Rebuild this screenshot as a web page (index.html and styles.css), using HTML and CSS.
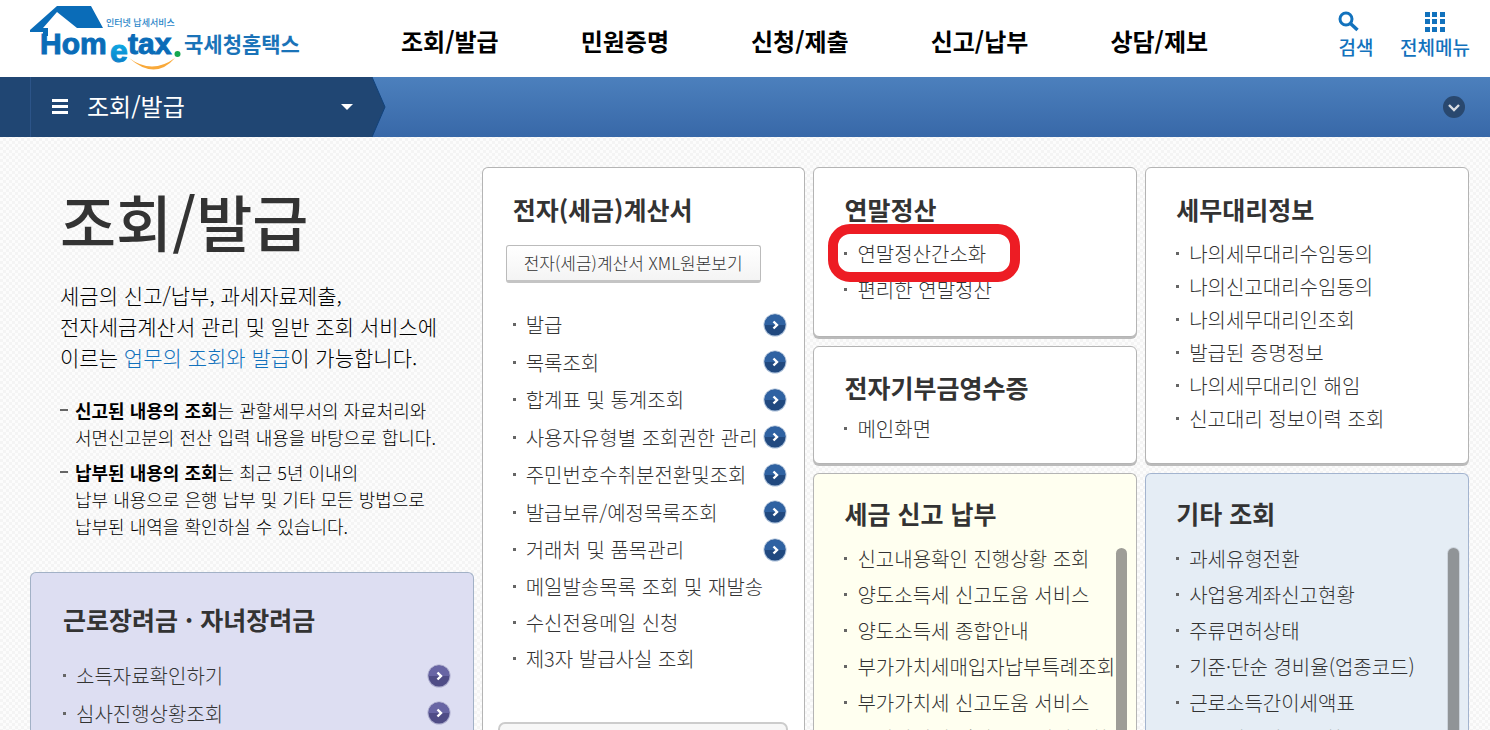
FILE: index.html
```html
<!DOCTYPE html>
<html lang="ko">
<head>
<meta charset="utf-8">
<meta name="viewport" content="width=device-width, initial-scale=1">
<title>국세청 홈택스 - 조회/발급</title>
<link rel="stylesheet" href="styles.css">
</head>
<body>
<svg class="defs" aria-hidden="true">
  <symbol id="go" viewBox="0 0 24 24">
    <circle class="go-rim" cx="12" cy="12" r="11.5"/>
    <circle class="go-disc" cx="12" cy="12" r="10.5"/>
    <path class="go-shine" d="M1.500 12a10.500 10.500 0 0 1 21 0z"/>
    <path d="M10.500 8.500 14 12l-3.500 3.500" fill="none" stroke="#fff" stroke-width="2.400"/>
  </symbol>
</svg>

<header class="header">
  <a class="logo" href="#" aria-label="Hometax 국세청홈택스">
    <svg width="272" height="72" viewBox="0 0 272 72">
      <defs>
        <linearGradient id="eFill" x1="0" y1="0" x2="0" y2="1"><stop offset="0" stop-color="#12c0f2"/><stop offset="1" stop-color="#0a72c0"/></linearGradient>
      </defs>
      <path d="M0 32v-2L27 6h34l12 22H47L27 12 13 28v4z" fill="#0a6cb8"/>
      <path d="M13 28h5v8h-5z" fill="#0a6cb8"/>
      <text class="logo-small" x="76" y="26">인터넷 납세서비스</text>
      <text class="logo-word" x="10" y="54">Hom</text>
      <text class="logo-e" x="80" y="62">e</text>
      <text class="logo-word" x="98" y="54">tax</text>
      <circle cx="147.500" cy="54" r="3" fill="#14a850"/>
      <path d="M99 58q23 17 46 0-20 23-46 0z" fill="#f9a93a"/>
      <text class="logo-name" x="154" y="52">국세청홈택스</text>
    </svg>
  </a>
  <nav class="gnb" aria-label="주 메뉴">
    <a href="#">조회/발급</a><a href="#">민원증명</a><a href="#">신청/제출</a><a href="#">신고/납부</a><a href="#">상담/제보</a>
  </nav>
  <div class="tools">
    <button type="button">
      <svg width="22" height="22" viewBox="0 0 22 22"><circle cx="8" cy="8" r="6" fill="none" stroke="#1272bd" stroke-width="3"/><path d="m12.500 12.500 7 6.500" stroke="#1272bd" stroke-width="3.500"/></svg>
      검색
    </button>
    <button type="button">
      <svg width="22" height="22" viewBox="0 0 22 22" fill="#1272bd"><path d="M1 1h5v5H1zM8 1h5v5H8zM16 1h5v5h-5zM1 8h5v5H1zM8 8h5v5H8zM16 8h5v5h-5zM1 16h5v5H1zM8 16h5v5H8zM16 16h5v5h-5z"/></svg>
      전체메뉴
    </button>
  </div>
</header>

<div class="subbar">
  <button class="crumb" type="button">
    <svg width="16" height="16" viewBox="0 0 16 16" fill="#fff"><path d="M0 0h16v3H0zM0 6h16v3H0zM0 12h16v3H0z"/></svg>
    <span>조회/발급</span>
    <svg class="caret" width="12" height="6" viewBox="0 0 12 6"><path d="M0 0h12L6 6z" fill="#fff"/></svg>
  </button>
  <svg class="crumb-tip" width="14" height="60" viewBox="0 0 14 60"><path d="M0 0 13 30 0 60z" fill="#204673"/><path d="M0 0 13 30 0 60" fill="none" stroke="#12427a"/></svg>
  <button class="expand" type="button" aria-label="펼치기">
    <svg width="22" height="22" viewBox="0 0 22 22"><circle cx="11" cy="11" r="11" fill="#29486f"/><path d="m6 9 5 5 5-5" fill="none" stroke="#d9dde3" stroke-width="2.400"/></svg>
  </button>
</div>

<main class="board">
  <div class="column">
    <section class="intro">
      <h1>조회/발급</h1>
      <p class="lead">세금의 신고/납부, 과세자료제출,<br>전자세금계산서 관리 및 일반 조회 서비스에<br>이르는 <em>업무의 조회와 발급</em>이 가능합니다.</p>
      <ul class="notes">
        <li><b>신고된 내용의 조회</b>는 관할세무서의 자료처리와<br>서면신고분의 전산 입력 내용을 바탕으로 합니다.</li>
        <li><b>납부된 내용의 조회</b>는 최근 5년 이내의<br>납부 내용으로 은행 납부 및 기타 모든 방법으로<br>납부된 내역을 확인하실 수 있습니다.</li>
      </ul>
    </section>
    <section class="card card-violet grow">
      <h2>근로장려금 · 자녀장려금</h2>
      <ul class="list list-go">
        <li><a href="#">소득자료확인하기</a><svg class="go"><use href="#go"/></svg></li>
        <li><a href="#">심사진행상황조회</a><svg class="go"><use href="#go"/></svg></li>
      </ul>
    </section>
  </div>

  <div class="column">
    <section class="card card-invoice grow">
      <h2>전자(세금)계산서</h2>
      <button class="xml" type="button">전자(세금)계산서 XML원본보기</button>
      <ul class="list list-go">
        <li><a href="#">발급</a><svg class="go"><use href="#go"/></svg></li>
        <li><a href="#">목록조회</a><svg class="go"><use href="#go"/></svg></li>
        <li><a href="#">합계표 및 통계조회</a><svg class="go"><use href="#go"/></svg></li>
        <li><a href="#">사용자유형별 조회권한 관리</a><svg class="go"><use href="#go"/></svg></li>
        <li><a href="#">주민번호수취분전환및조회</a><svg class="go"><use href="#go"/></svg></li>
        <li><a href="#">발급보류/예정목록조회</a><svg class="go"><use href="#go"/></svg></li>
        <li><a href="#">거래처 및 품목관리</a><svg class="go"><use href="#go"/></svg></li>
      </ul>
      <ul class="list">
        <li><a href="#">메일발송목록 조회 및 재발송</a></li>
        <li><a href="#">수신전용메일 신청</a></li>
        <li><a href="#">제3자 발급사실 조회</a></li>
      </ul>
      <div class="panel"></div>
    </section>
  </div>

  <div class="column">
    <section class="card card-yearend">
      <h2>연말정산</h2>
      <ul class="list">
        <li class="marked"><a href="#">연말정산간소화</a></li>
        <li><a href="#">편리한 연말정산</a></li>
      </ul>
    </section>
    <section class="card card-donation">
      <h2>전자기부금영수증</h2>
      <ul class="list"><li><a href="#">메인화면</a></li></ul>
    </section>
    <section class="card card-scroll card-cream grow">
      <h2>세금 신고 납부</h2>
      <div class="scroll">
        <ul class="list">
          <li><a href="#">신고내용확인 진행상황 조회</a></li>
          <li><a href="#">양도소득세 신고도움 서비스</a></li>
          <li><a href="#">양도소득세 종합안내</a></li>
          <li><a href="#">부가가치세매입자납부특례조회</a></li>
          <li><a href="#">부가가치세 신고도움 서비스</a></li>
          <li><a href="#">부가가치세 예정고지 세액조회</a></li>
        </ul>
        <div class="thumb"></div>
      </div>
    </section>
  </div>

  <div class="column">
    <section class="card card-agent">
      <h2>세무대리정보</h2>
      <ul class="list list-tight">
        <li><a href="#">나의세무대리수임동의</a></li>
        <li><a href="#">나의신고대리수임동의</a></li>
        <li><a href="#">나의세무대리인조회</a></li>
        <li><a href="#">발급된 증명정보</a></li>
        <li><a href="#">나의세무대리인 해임</a></li>
        <li><a href="#">신고대리 정보이력 조회</a></li>
      </ul>
    </section>
    <section class="card card-scroll card-blue grow">
      <h2>기타 조회</h2>
      <div class="scroll">
        <ul class="list">
          <li><a href="#">과세유형전환</a></li>
          <li><a href="#">사업용계좌신고현황</a></li>
          <li><a href="#">주류면허상태</a></li>
          <li><a href="#">기준·단순 경비율(업종코드)</a></li>
          <li><a href="#">근로소득간이세액표</a></li>
          <li><a href="#">표준재무제표 조회</a></li>
        </ul>
        <div class="thumb"></div>
      </div>
    </section>
  </div>
</main>
</body>
</html>
```

FILE: styles.css
```css
*, ::before, ::after { box-sizing: border-box; }

body {
  margin: 0;
  height: 100vh;
  overflow: hidden;
  display: flex;
  flex-direction: column;
  color: #000;
  font-family: "Noto Sans CJK KR", sans-serif;
  background: repeating-conic-gradient(#f4f4f4 0 25%, #fcfcfc 0 50%) 0 0 / 6px 6px;
}

h1, h2, p, ul { margin: 0; padding: 0; }
ul { list-style: none; }
a { color: inherit; text-decoration: none; }
button { font: inherit; color: inherit; border: 0; padding: 0; background: none; cursor: pointer; }
svg { display: block; flex: none; }
.defs { position: absolute; width: 0; height: 0; }

/* Header */
.header {
  flex: none;
  display: flex;
  align-items: center;
  height: 77px;
  padding: 0 20px 0 30px;
  background: #fff;
}
.logo { height: 72px; margin-bottom: 5px; }
.logo-small { font-size: 9px; font-weight: 500; fill: #2a86c8; }
.logo-word { font: bold 30px "Liberation Sans", sans-serif; fill: #0a6cb8; stroke: #0a6cb8; }
.logo-e { font: bold 32px "Liberation Sans", sans-serif; fill: url(#eFill); stroke: url(#eFill); }
.logo-name { font-size: 21px; font-weight: 700; fill: #1a73b8; }
.gnb {
  display: flex;
  gap: 82px;
  margin-left: 99px;
  padding-top: 4px;
  font-size: 24px;
  font-weight: 700;
  line-height: 36px;
  white-space: nowrap;
}
.tools { display: flex; gap: 26px; margin-left: auto; padding-bottom: 6px; }
.tools button {
  display: flex;
  flex-direction: column;
  align-items: center;
  gap: 0;
  color: #1272bd;
  font-size: 19px;
  font-weight: 500;
  line-height: 28px;
  white-space: nowrap;
}
.tools button:first-child svg { margin-right: 14px; }

/* Section bar */
.subbar {
  flex: none;
  display: flex;
  align-items: center;
  height: 60px;
  padding-right: 25px;
  background: linear-gradient(#4c80bd, #3868a8);
}
.crumb {
  display: flex;
  align-items: center;
  align-self: stretch;
  width: 372px;
  padding: 0 19px 0 52px;
  background: linear-gradient(90deg, transparent 30px, #2c5488 30px 31px, transparent 31px) #204673;
  color: #fff;
  font-size: 24px;
  font-weight: 400;
  line-height: 58px;
}
.crumb span { margin: 0 0 2px 19px; }
.caret { margin-left: auto; }
.expand { margin-left: auto; }

/* Board */
.board {
  flex: 1;
  min-height: 0;
  display: grid;
  grid-template-columns: 444fr 324fr 324fr 324fr;
  gap: 8px;
  padding: 30px 21px 0 30px;
}
.column { display: flex; flex-direction: column; gap: 9px; min-width: 0; min-height: 0; }

.intro { padding: 14px 0 23px 30px; }
h1 { color: #333; font-size: 61px; font-weight: 500; line-height: 80px; }
.lead { margin-top: 19px; font-size: 21px; font-weight: 300; line-height: 31px; white-space: nowrap; }
.lead em { color: #1272bd; font-style: normal; }
.notes { margin-top: 24px; font-size: 18px; font-weight: 300; line-height: 27px; white-space: nowrap; }
.notes li { position: relative; padding-left: 15px; }
.notes li + li { margin-top: 8px; }
.notes li::before { content: ""; position: absolute; left: 0; top: 12px; width: 8px; height: 2px; background: #666; }
.notes b { font-weight: 700; }

.card {
  padding: 25px 17px 0 30px;
  overflow: hidden;
  background: #fff;
  border: 1px solid #b4b4b4;
  border-radius: 6px;
  box-shadow: 0 2px 0 #bbb;
}
.card.grow {
  flex: 1;
  min-height: 0;
  border-bottom: 0;
  border-radius: 6px 6px 0 0;
  box-shadow: none;
}
.card h2 { color: #333; font-size: 25px; font-weight: 700; line-height: 32px; white-space: nowrap; }
.card-violet { padding: 30px 22px 0 32px; background: #dddef2; border-color: #a2b1c6; }
.card-cream { background: #fffff0; }
.card-blue { background: #e5edf5; border-color: #a3b4cf; }

.list { color: #333; font-size: 20px; font-weight: 300; white-space: nowrap; }
.list li { display: flex; align-items: center; height: 36px; }
.list li::before { content: ""; flex: none; width: 3px; height: 3px; margin-right: 10px; background: #666; }
.list-go li { height: 37px; }
.list-go li:nth-child(even) { height: 38px; }
.list-tight li { height: 33px; }
.go {
  --rim: #a9bed8;
  --disc: #21497f;
  --shine: #2f62a2;
  width: 24px;
  height: 24px;
  margin-left: auto;
}
.card-violet .go { --rim: #aaaacc; --disc: #4f4c86; --shine: #6865a4; }
.go-rim { fill: var(--rim); }
.go-disc { fill: var(--disc); }
.go-shine { fill: var(--shine); }
.card-violet .list { margin-top: 22px; }

.card-invoice .xml {
  display: block;
  height: 38px;
  margin: 20px 0 23px -7px;
  padding: 0 17px;
  color: #333;
  font-size: 17px;
  font-weight: 300;
  line-height: 34px;
  white-space: nowrap;
  background: linear-gradient(#fff, #f4f4f4);
  border: 1px solid #bbb;
  border-bottom: 3px solid #c4c4c4;
  border-radius: 3px;
}
.panel {
  height: 60px;
  margin: 46px -1px 0 -15px;
  background: #f7f7f7;
  border: 2px solid #ccc;
  border-radius: 7px;
}

.card-yearend { padding-bottom: 29px; }
.card-yearend .list { margin-top: 10px; }
.card.card-donation { padding: 24px 17px 17px 30px; }
.card-donation .list { margin-top: 7px; }
.card-agent { padding-bottom: 28px; }
.card-agent .list { margin-top: 12px; }

/* Highlight ring over the first year-end entry */
.marked { position: relative; }
.marked::after {
  content: "";
  position: absolute;
  left: -16px;
  top: -11px;
  width: 192px;
  height: 58px;
  border: 10px solid #ed1c24;
  border-radius: 22px;
}

.card-scroll { padding: 23px 9px 0 30px; }
.scroll { display: flex; justify-content: space-between; margin-top: 11px; }
.scroll .list { min-width: 0; }
.thumb { flex: none; width: 11px; margin-top: 8px; border-radius: 6px; background: #9e9d97; }
.card-blue .thumb { background: #909497; box-shadow: 0 0 0 1px #cdd4dc; }
```
